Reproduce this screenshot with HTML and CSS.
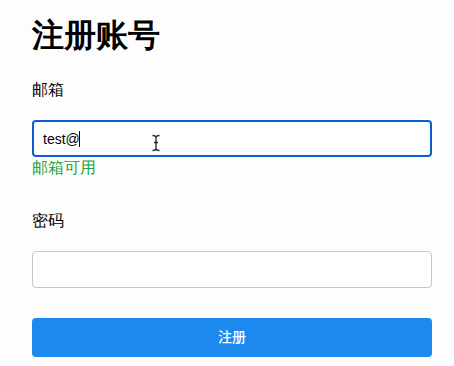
FILE: index.html
```html
<!DOCTYPE html>
<html lang="zh">
<head>
<meta charset="utf-8">
<link rel="stylesheet" href="styles.css">
</head>
<body>
<main class="form">
  <h1 class="title">注册账号</h1>
  <label class="label">邮箱</label>
  <div class="field field-email">
    <input class="input input-focus" type="text" value="test@">
    <span class="caret"></span>
    <svg class="ibeam" width="10" height="18" viewBox="0 0 10 18"><path d="M1.5 1.5 Q5 1.5 5 3.5 Q5 1.5 8.5 1.5 M5 3.5 V14.5 M3 8.5 H7 M1.5 16.5 Q5 16.5 5 14.5 Q5 16.5 8.5 16.5" fill="none" stroke="#222" stroke-width="1.3"/></svg>
  </div>
  <div class="hint">邮箱可用</div>
  <label class="label label-pw">密码</label>
  <div class="field field-pw">
    <input class="input" type="password">
  </div>
  <button class="btn"><span class="btn-text">注册</span></button>
</main>
</body>
</html>
```
FILE: styles.css
```css
html, body { margin: 0; padding: 0; background: #fdfdfd; }
body { font-family: serif; color: #000; }
.form { width: 400px; margin-left: 32px; display: flex; flex-direction: column; }
.title { margin: 15px 0 0; font-size: 32px; line-height: 40px; font-weight: bold; }
.label { display: block; margin-top: 25px; font-size: 16px; line-height: 20px; }
.field { position: relative; }
.field-email { margin-top: 20px; }
.input {
  box-sizing: border-box; width: 400px; height: 37px; margin: 0;
  border: 1px solid #c8c8c8; border-radius: 4px; background: #fff;
  padding: 0 10px; font-family: "Liberation Sans", Arial, sans-serif; font-size: 14px; color: #000;
  outline: none;
}
.input-focus { border: 2px solid #0b5fd0; padding: 0 9px; }
.caret { position: absolute; left: 47px; top: 11px; width: 1px; height: 16px; background: #000; }
.ibeam { position: absolute; left: 119px; top: 14px; }
.hint { margin-top: 1px; font-size: 16px; line-height: 20px; color: #24a33a; }
.label-pw { margin-top: 33px; }
.field-pw { margin-top: 20px; }
.btn {
  margin-top: 30px; width: 400px; height: 39px; border: none; border-radius: 4px;
  background: #1d89ef; color: #fff; font-family: "Noto Sans CJK SC", sans-serif;
  font-size: 14px; font-weight: 500; padding: 0 0 4px; line-height: 20px;
}
```
